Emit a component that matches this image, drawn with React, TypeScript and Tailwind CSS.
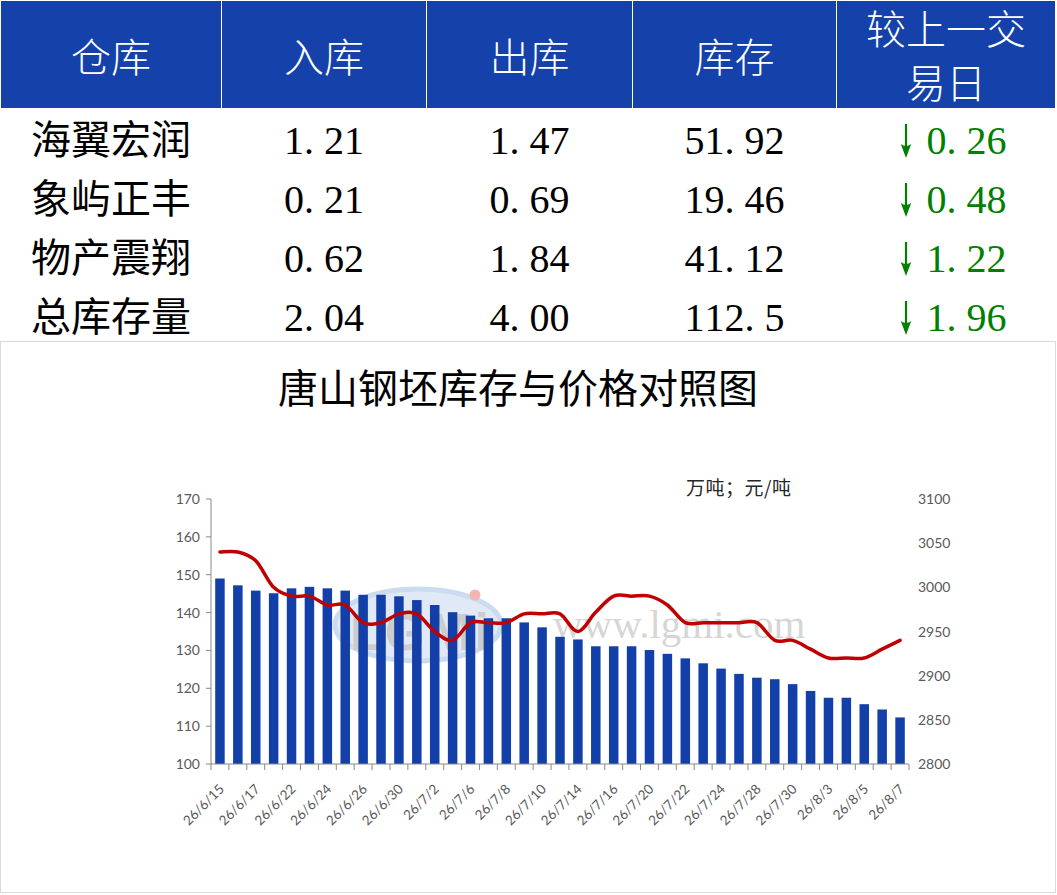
import { FC } from "react";

const header = ["仓库", "入库", "出库", "库存"];
const widths = ["w-[220px]", "w-[204px]", "w-[205px]", "w-[203px]", "w-[218px]"];

const rows = [
  { name: "海翼宏润", inn: "1.21", out: "1.47", stock: "51.92", diff: "0.26" },
  { name: "象屿正丰", inn: "0.21", out: "0.69", stock: "19.46", diff: "0.48" },
  { name: "物产震翔", inn: "0.62", out: "1.84", stock: "41.12", diff: "1.22" },
  { name: "总库存量", inn: "2.04", out: "4.00", stock: "112.5", diff: "1.96" },
];

// stock (万吨) and price (元/吨) per trading day
const stock = [
  149, 147.2, 145.8, 145.1, 146.4, 146.8, 146.4, 145.8, 144.7, 144.7, 144.3, 143.3, 142, 140.1, 139.2,
  138.5, 138.5, 137.4, 136.1, 133.6, 132.9, 131.1, 131.1, 131.1, 130.1, 129.1, 127.9, 126.6, 125.2,
  123.8, 122.8, 122.4, 121.1, 119.3, 117.5, 117.5, 115.8, 114.4, 112.3,
];
const price = [
  3040, 3040, 3030, 3000, 2990, 2990, 2980, 2980, 2960, 2960, 2970, 2970, 2950, 2940, 2960, 2960, 2960,
  2970, 2970, 2970, 2950, 2972, 2990, 2990, 2990, 2980, 2960, 2960, 2960, 2960, 2960, 2940, 2940, 2930,
  2920, 2920, 2920, 2930, 2940,
];
const dates = [
  "26/6/15", "26/6/17", "26/6/22", "26/6/24", "26/6/26", "26/6/30", "26/7/2", "26/7/6", "26/7/8",
  "26/7/10", "26/7/14", "26/7/16", "26/7/20", "26/7/22", "26/7/24", "26/7/28", "26/7/30", "26/8/3",
  "26/8/5", "26/8/7",
];

const X0 = 211;
const X1 = 909;
const Y0 = 764;
const YT = 499;
const cw = (X1 - X0) / stock.length;
const yL = (v: number) => Y0 - ((v - 100) * (Y0 - YT)) / 70;
const yR = (p: number) => Y0 - ((p - 2800) * (Y0 - YT)) / 300;

const linePath = () => {
  const pts = price.map((p, i) => [X0 + cw * (i + 0.5), yR(p)]);
  let d = `M${pts[0][0]} ${pts[0][1]}`;
  for (let i = 0; i < pts.length - 1; i++) {
    const p0 = pts[i - 1] || pts[i];
    const p1 = pts[i];
    const p2 = pts[i + 1];
    const p3 = pts[i + 2] || p2;
    const c1x = p1[0] + (p2[0] - p0[0]) / 6;
    const c1y = p1[1] + (p2[1] - p0[1]) / 6;
    const c2x = p2[0] - (p3[0] - p1[0]) / 6;
    const c2y = p2[1] - (p3[1] - p1[1]) / 6;
    d += ` C${c1x} ${c1y} ${c2x} ${c2y} ${p2[0]} ${p2[1]}`;
  }
  return d;
};

const Num: FC<{ v: string }> = ({ v }) => (
  <span className="inline-flex">
    {v.split("").map((c, i) => (
      <span key={i} className={c === "." ? "w-[20px]" : "w-[20px] text-center"}>
        {c}
      </span>
    ))}
  </span>
);

const DownArrow = () => (
  <svg width="12" height="34" viewBox="0 0 12 34" className="shrink-0">
    <path d="M6 0 V27" stroke="#008000" strokeWidth="2.2" />
    <path d="M0.8 20 L6 34 L11.2 20 Q6 24 0.8 20 Z" fill="#008000" />
  </svg>
);

const Chart = () => {
  const axis = "#898989";
  const label = "#595959";
  return (
    <svg width="1054" height="462" viewBox="1 430 1054 462" className="block">
      {/* watermark */}
      <g opacity={0.85}>
        <ellipse cx="418" cy="625" rx="83" ry="36" fill="#dbe6f4" stroke="#c3d7ee" strokeWidth="5" />
        <text x="350" y="650" fontFamily="Liberation Sans" fontWeight="bold" fontSize="52" fill="#c4c4c4" letterSpacing="3">
          LGMi
        </text>
        <circle cx="475" cy="595" r="5.5" fill="#f2a8a8" />
      </g>
      <text x="553" y="638" fontFamily="Liberation Serif" fontSize="41" fill="#d6d6d6">
        www.lgmi.com
      </text>

      <text x="686" y="495" fontFamily="Noto Sans CJK SC" fontSize="19" fill="#262626" letterSpacing="0.5">
        万吨；元/吨
      </text>

      {/* left axis */}
      <line x1={X0} y1={YT} x2={X0} y2={Y0} stroke={axis} strokeWidth="1" />
      {[100, 110, 120, 130, 140, 150, 160, 170].map((v) => (
        <g key={v}>
          <line x1={X0 - 5} y1={yL(v)} x2={X0} y2={yL(v)} stroke={axis} strokeWidth="1" />
          <text x="200" y={yL(v) + 5} textAnchor="end" fontFamily="Lato" fontSize="14" fill={label}>
            {v}
          </text>
        </g>
      ))}
      {[2800, 2850, 2900, 2950, 3000, 3050, 3100].map((p) => (
        <text key={p} x="918" y={yR(p) + 5} fontFamily="Lato" fontSize="14" fill={label}>
          {p}
        </text>
      ))}

      {/* bars */}
      {stock.map((v, i) => (
        <rect key={i} x={X0 + cw * (i + 0.5) - 4.75} y={yL(v)} width="9.5" height={Y0 - yL(v)} fill="#1340A8" />
      ))}

      {/* x axis */}
      <line x1={X0} y1={Y0} x2={X1} y2={Y0} stroke={axis} strokeWidth="1" />
      {Array.from({ length: stock.length + 1 }).map((_, k) => (
        <line key={k} x1={X0 + cw * k} y1={Y0} x2={X0 + cw * k} y2={Y0 + 6} stroke={axis} strokeWidth="1" />
      ))}
      {dates.map((d, j) => {
        const cx = X0 + cw * (2 * j + 0.5);
        return (
          <text
            key={d}
            transform={`translate(${cx + 5} 790) rotate(-45)`}
            textAnchor="end"
            fontFamily="Lato"
            fontSize="13.5"
            fill={label}
          >
            {d}
          </text>
        );
      })}

      <path d={linePath()} fill="none" stroke="#C00000" strokeWidth="3.5" strokeLinecap="round" strokeLinejoin="round" />
    </svg>
  );
};

const App: FC = () => {
  return (
    <div className="w-[1057px] h-[895px] bg-white font-['Liberation_Serif','Noto_Sans_CJK_SC',serif] text-black overflow-hidden">
      <div className="flex gap-[1px] pt-[1px] pl-[1px]">
        {header.map((h, i) => (
          <div key={h} className={`${widths[i]} h-[107px] bg-[#1442AA] flex items-center justify-center pt-[8px] text-white text-[40px] font-light`}>
            {h}
          </div>
        ))}
        <div className={`${widths[4]} h-[107px] bg-[#1442AA] flex flex-col items-center justify-center pt-[6px] text-white text-[40px] leading-[54px] font-light`}>
          <span>较上一交</span>
          <span>易日</span>
        </div>
      </div>

      <div className="h-[233px] pt-[3px]">
        {rows.map((r) => (
          <div key={r.name} className="flex gap-[1px] pl-[1px] h-[59px] text-[40px] leading-none">
            <div className={`${widths[0]} flex items-center justify-center`}>{r.name}</div>
            <div className={`${widths[1]} flex items-center justify-center`}>
              <Num v={r.inn} />
            </div>
            <div className={`${widths[2]} flex items-center justify-center`}>
              <Num v={r.out} />
            </div>
            <div className={`${widths[3]} flex items-center justify-center`}>
              <Num v={r.stock} />
            </div>
            <div className={`${widths[4]} flex items-center justify-center gap-[15px] pl-[14px] text-[#008000]`}>
              <DownArrow />
              <Num v={r.diff} />
            </div>
          </div>
        ))}
      </div>

      <div className="w-[1056px] h-[552px] border border-[#d9d9d9] bg-white">
        <div className="h-[88px] flex items-center justify-center pr-[20px] text-[40px] font-['Noto_Sans_CJK_SC',sans-serif] leading-none">
          唐山钢坯库存与价格对照图
        </div>
        <Chart />
      </div>
    </div>
  );
};

export default App;
